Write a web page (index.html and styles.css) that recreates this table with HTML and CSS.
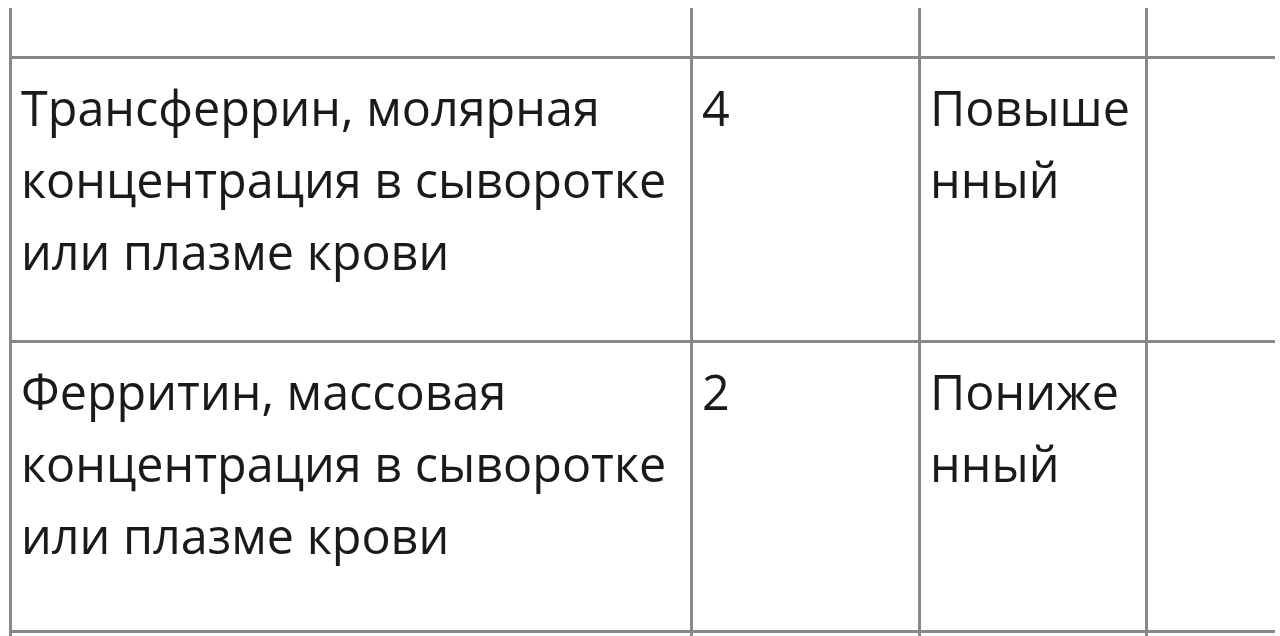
FILE: index.html
```html
<!DOCTYPE html>
<html lang="ru">
<head>
<meta charset="utf-8">
<link rel="stylesheet" href="styles.css">
</head>
<body>
<div class="frame">
  <table class="grid">
    <colgroup>
      <col class="c-name">
      <col class="c-num">
      <col class="c-state">
      <col class="c-extra">
    </colgroup>
    <tbody>
      <tr class="row-top">
        <td></td><td></td><td></td><td></td>
      </tr>
      <tr class="row-a">
        <td>Трансферрин, молярная концентрация в сыворотке или плазме крови</td>
        <td>4</td>
        <td class="state">Повышенный</td>
        <td></td>
      </tr>
      <tr class="row-b">
        <td>Ферритин, массовая концентрация в сыворотке или плазме крови</td>
        <td>2</td>
        <td class="state">Пониженный</td>
        <td></td>
      </tr>
      <tr class="row-end">
        <td></td><td></td><td></td><td></td>
      </tr>
    </tbody>
  </table>
</div>
</body>
</html>
```

FILE: styles.css
```css
html, body {
  margin: 0;
  padding: 0;
  background: #ffffff;
}

body {
  height: 636px;
  overflow: hidden;
}

.frame {
  width: 1275px;
  height: 628px;
  margin-top: 8px;
  padding-left: 9px;
  box-sizing: border-box;
  overflow: hidden;
}

.grid {
  border-collapse: collapse;
  table-layout: fixed;
  width: 1420px;
  font-family: "Open Sans", "Noto Sans", sans-serif;
  font-size: 48.5px;
  line-height: 72px;
  color: #1a1a1a;
}

.c-name { width: 681px; }
.c-num { width: 228px; }
.c-state { width: 227px; }
.c-extra { width: 284px; }

.grid td {
  border: 3px solid #888888;
  vertical-align: top;
  padding: 12px 8px 0 9px;
}

.grid .state {
  word-break: break-all;
}

.row-top td {
  border-top: none;
  height: 48px;
  padding: 0;
}

.row-a td {
  height: 269px;
}

.row-b td {
  height: 275px;
}

.row-end td {
  border-bottom: none;
  height: 3px;
  padding: 0;
}
```
